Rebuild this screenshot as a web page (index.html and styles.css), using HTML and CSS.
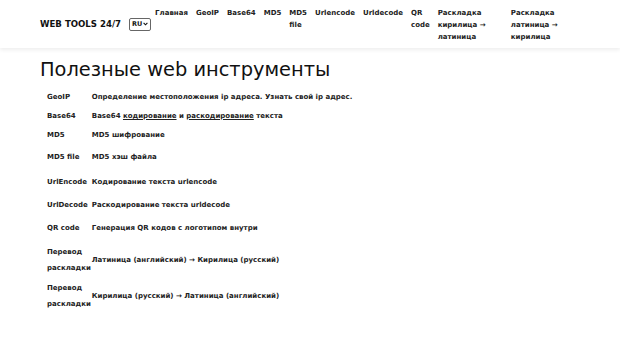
FILE: index.html
```html
<html>
    <head>
        <link rel="stylesheet" href="styles.css">
    </head>
    <body>
        <div class="header">
            <div class="brand">
                <span class="brandName">WEB TOOLS 24/7</span>
                <div class="lang">
                    <span>RU</span>
                    <svg width="5" height="4" viewBox="0 0 5 4"><path d="M0.6 0.8 L2.5 2.8 L4.4 0.8" fill="none" stroke="#111" stroke-width="1.1"/></svg>
                </div>
            </div>
            <div class="nav">
                <a href="#">Главная</a>
                <a href="#">GeoIP</a>
                <a href="#">Base64</a>
                <a href="#">MD5</a>
                <a href="#">MD5 file</a>
                <a href="#">Urlencode</a>
                <a href="#">Urldecode</a>
                <a href="#">QR code</a>
                <a href="#">Раскладка кирилица → латиница</a>
                <a href="#">Раскладка латиница → кирилица</a>
            </div>
        </div>

        <div id="content">
            <div class="title">Полезные web инструменты</div>
            <table class="tools">
                <tr class="short"><td class="name">GeoIP</td><td>Определение местоположения ip адреса. Узнать свой ip адрес.</td></tr>
                <tr class="short"><td class="name">Base64</td><td>Base64 <u>кодирование</u> и <u>раскодирование</u> текста</td></tr>
                <tr class="short"><td class="name">MD5</td><td>MD5 шифрование</td></tr>
                <tr class="tall"><td class="name">MD5 file</td><td>MD5 хэш файла</td></tr>
                <tr><td class="name">UrlEncode</td><td>Кодирование текста urlencode</td></tr>
                <tr><td class="name">UrlDecode</td><td>Раскодирование текста urldecode</td></tr>
                <tr><td class="name">QR code</td><td>Генерация QR кодов с логотипом внутри</td></tr>
                <tr class="double"><td class="name">Перевод раскладки</td><td>Латиница (английский) → Кирилица (русский)</td></tr>
                <tr class="double last"><td class="name">Перевод раскладки</td><td>Кирилица (русский) → Латиница (английский)</td></tr>
            </table>
        </div>
    </body>
</html>
```

FILE: styles.css
```css
body{
    margin: 0;
    font-family: "DejaVu Sans", sans-serif;
    color: rgb(33, 37, 41);
    background: #fff;
}
.header{
    display: flex;
    align-items: flex-start;
    height: 48px;
    padding: 0 40px;
    box-shadow: 0 2px 4px rgba(0, 0, 0, 0.07);
}
.brand{
    display: flex;
    align-items: center;
    flex-shrink: 0;
    height: 48px;
}
.brandName{
    font-size: 8.6px;
    font-weight: bold;
    color: #111;
}
.lang{
    display: flex;
    align-items: center;
    justify-content: space-between;
    box-sizing: border-box;
    margin-left: 8px;
    width: 22px;
    height: 13px;
    padding: 0 2px 0 2px;
    font-size: 6.5px;
    font-weight: bold;
    color: #111;
    border: 1px solid #666;
    border-radius: 2px;
    background: #fff;
}
.nav{
    display: flex;
    flex: 1;
    min-width: 0;
    align-items: flex-start;
    padding-top: 7px;
}
.nav a{
    font-size: 7px;
    font-weight: bold;
    line-height: 12px;
    color: #222;
    text-decoration: none;
    padding: 0 4px;
}
#content{
    padding: 0 40px;
}
.title{
    font-size: 19.4px;
    line-height: 23px;
    margin-top: 10px;
    margin-bottom: 6px;
    color: #111;
}
.tools{
    border-collapse: collapse;
    font-size: 7px;
    font-weight: bold;
    color: #222;
}
.tools td{
    padding: 0;
    height: 23px;
    line-height: 16px;
    vertical-align: middle;
}
.tools tr.short td{
    height: 19px;
}
.tools tr.tall td{
    height: 26px;
}
.tools tr.double td{
    height: 41px;
}
.tools tr.last td{
    height: 27px;
}
.tools td.name{
    width: 1px;
    padding: 0 1px 0 7px;
}
.tools u{
    text-underline-offset: 1px;
}
```
